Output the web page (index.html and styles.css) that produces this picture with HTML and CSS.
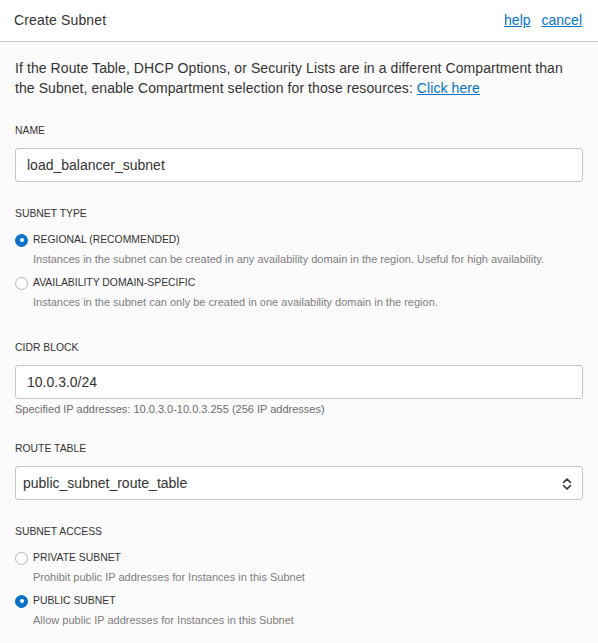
FILE: index.html
```html
<!DOCTYPE html>
<html>
<head>
<meta charset="utf-8">
<link rel="stylesheet" href="styles.css">
</head>
<body>
<div class="panel">
  <div class="header">
    <div class="title">Create Subnet</div>
    <div class="actions"><a class="link" href="#">help</a><a class="link" href="#">cancel</a></div>
  </div>
  <div class="content">
    <p class="intro">If the Route Table, DHCP Options, or Security Lists are in a different Compartment than the Subnet, enable Compartment selection for those resources: <a class="link" href="#">Click here</a></p>

    <div class="field first">
      <div class="label">NAME</div>
      <div class="input">load_balancer_subnet</div>
    </div>

    <div class="field radios">
      <div class="label">SUBNET TYPE</div>
      <div class="options">
        <div class="option">
          <div class="row"><span class="radio checked"></span><span class="opt-label">REGIONAL (RECOMMENDED)</span></div>
          <div class="desc">Instances in the subnet can be created in any availability domain in the region. Useful for high availability.</div>
        </div>
        <div class="option">
          <div class="row"><span class="radio"></span><span class="opt-label">AVAILABILITY DOMAIN-SPECIFIC</span></div>
          <div class="desc">Instances in the subnet can only be created in one availability domain in the region.</div>
        </div>
      </div>
    </div>

    <div class="field after-radios">
      <div class="label">CIDR BLOCK</div>
      <div class="input">10.0.3.0/24</div>
      <div class="help">Specified IP addresses: 10.0.3.0-10.0.3.255 (256 IP addresses)</div>
    </div>

    <div class="field">
      <div class="label">ROUTE TABLE</div>
      <div class="select">
        <span>public_subnet_route_table</span>
        <svg class="chev" width="10" height="14" viewBox="0 0 10 14"><path d="M1.5 5.5 L5 2 L8.5 5.5" fill="none" stroke="#333" stroke-width="1.6" stroke-linecap="round" stroke-linejoin="round"/><path d="M1.5 8.5 L5 12 L8.5 8.5" fill="none" stroke="#333" stroke-width="1.6" stroke-linecap="round" stroke-linejoin="round"/></svg>
      </div>
    </div>

    <div class="field radios">
      <div class="label">SUBNET ACCESS</div>
      <div class="options">
        <div class="option">
          <div class="row"><span class="radio"></span><span class="opt-label">PRIVATE SUBNET</span></div>
          <div class="desc">Prohibit public IP addresses for Instances in this Subnet</div>
        </div>
        <div class="option">
          <div class="row"><span class="radio checked"></span><span class="opt-label">PUBLIC SUBNET</span></div>
          <div class="desc">Allow public IP addresses for Instances in this Subnet</div>
        </div>
      </div>
    </div>
  </div>
</div>
</body>
</html>
```

FILE: styles.css
```css
html, body {
  margin: 0;
  padding: 0;
  background: #fbfbfb;
}
body {
  font-family: "Liberation Sans", Arial, Helvetica, sans-serif;
  color: #333;
}
.panel {
  width: 598px;
  height: 643px;
  overflow: hidden;
  background: #fbfbfb;
}
.header {
  box-sizing: border-box;
  padding: 0 16px 0 14px;
  display: flex;
  align-items: center;
  justify-content: space-between;
  background: #fff;
  border-bottom: 1px solid #c2c5cb;
  height: 42px;
}
.title {
  font-size: 14px;
  letter-spacing: 0.15px;
  color: #333;
  line-height: 20px;
  padding-bottom: 1px;
}
.actions {
  display: flex;
  gap: 11px;
  font-size: 14px;
  line-height: 20px;
  padding-bottom: 1px;
}
.link {
  color: #0a72c8;
  text-decoration: underline;
}
.content {
  padding: 16px 15px 0 15px;
}
.intro {
  margin: 0;
  font-size: 14px;
  letter-spacing: 0.08px;
  line-height: 20px;
  color: #333;
  max-width: 552px;
}
.field {
  margin-top: 26px;
}
.field + .field {
  margin-top: 25px;
}
.field.after-radios {
  margin-top: 31px;
}
.label {
  font-size: 10.4px;
  line-height: 14px;
  color: #333;
  margin-bottom: 10px;
}
.input, .select {
  height: 34px;
  box-sizing: border-box;
  border: 1px solid #c3c5cb;
  border-radius: 3px;
  background: #fff;
  font-size: 14px;
  color: #333;
  display: flex;
  align-items: center;
}
.input {
  padding: 0 11px;
}
.select {
  padding: 0 10px 0 7px;
  justify-content: space-between;
}
.chev {
  display: block;
  margin-top: 1px;
}
.help {
  font-size: 11px;
  line-height: 16px;
  color: #6c6c6c;
  margin-top: 2px;
}
.radios .label {
  margin-bottom: 11px;
}
.options {
  display: flex;
  flex-direction: column;
  gap: 8px;
}
.row {
  display: flex;
  align-items: center;
  height: 16px;
}
.radio {
  width: 13px;
  height: 13px;
  box-sizing: border-box;
  border-radius: 50%;
  border: 1px solid #b4b6bb;
  background: #fff;
  margin-right: 5px;
  position: relative;
  flex: none;
}
.radio.checked {
  background: #0a72c8;
  border-color: #0a72c8;
}
.radio.checked::after {
  content: "";
  position: absolute;
  left: 50%;
  top: 50%;
  width: 4px;
  height: 4px;
  margin: -2px 0 0 -2px;
  border-radius: 50%;
  background: #fff;
}
.opt-label {
  font-size: 10.4px;
  line-height: 16px;
  color: #333;
}
.desc {
  font-size: 11px;
  line-height: 16px;
  color: #7d7d7d;
  margin-top: 3px;
  padding-left: 18px;
}
```
